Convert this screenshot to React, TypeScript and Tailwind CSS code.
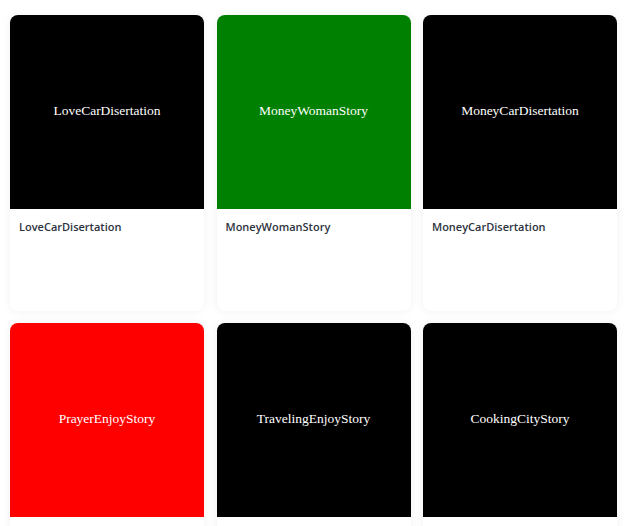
const stories = [
  { title: 'LoveCarDisertation', bg: 'bg-black' },
  { title: 'MoneyWomanStory', bg: 'bg-[#008000]' },
  { title: 'MoneyCarDisertation', bg: 'bg-black' },
  { title: 'PrayerEnjoyStory', bg: 'bg-[#ff0000]' },
  { title: 'TravelingEnjoyStory', bg: 'bg-black' },
  { title: 'CookingCityStory', bg: 'bg-black' },
];

function StoryCard({ title, bg }: { title: string; bg: string }) {
  return (
    <div className="bg-white rounded-lg overflow-hidden shadow-[0_0_10px_rgba(0,0,0,0.06)]">
      <div className={`${bg} aspect-square flex items-center justify-center pb-[2px]`}>
        <span className="text-white text-[13.5px] font-['Liberation_Serif',serif]">{title}</span>
      </div>
      <div className="h-[102px] px-[9px] pt-[10px]">
        <p className="text-[11px] font-semibold text-[#2d3340] font-['Open_Sans',sans-serif]">
          {title}
        </p>
      </div>
    </div>
  );
}

export default function App() {
  return (
    <div className="min-h-screen bg-white pl-[10px] pr-[8px] pt-[15px]">
      <div className="grid grid-cols-3 gap-x-[12.5px] gap-y-[12px]">
        {stories.map((s) => (
          <StoryCard key={s.title} {...s} />
        ))}
      </div>
    </div>
  );
}
